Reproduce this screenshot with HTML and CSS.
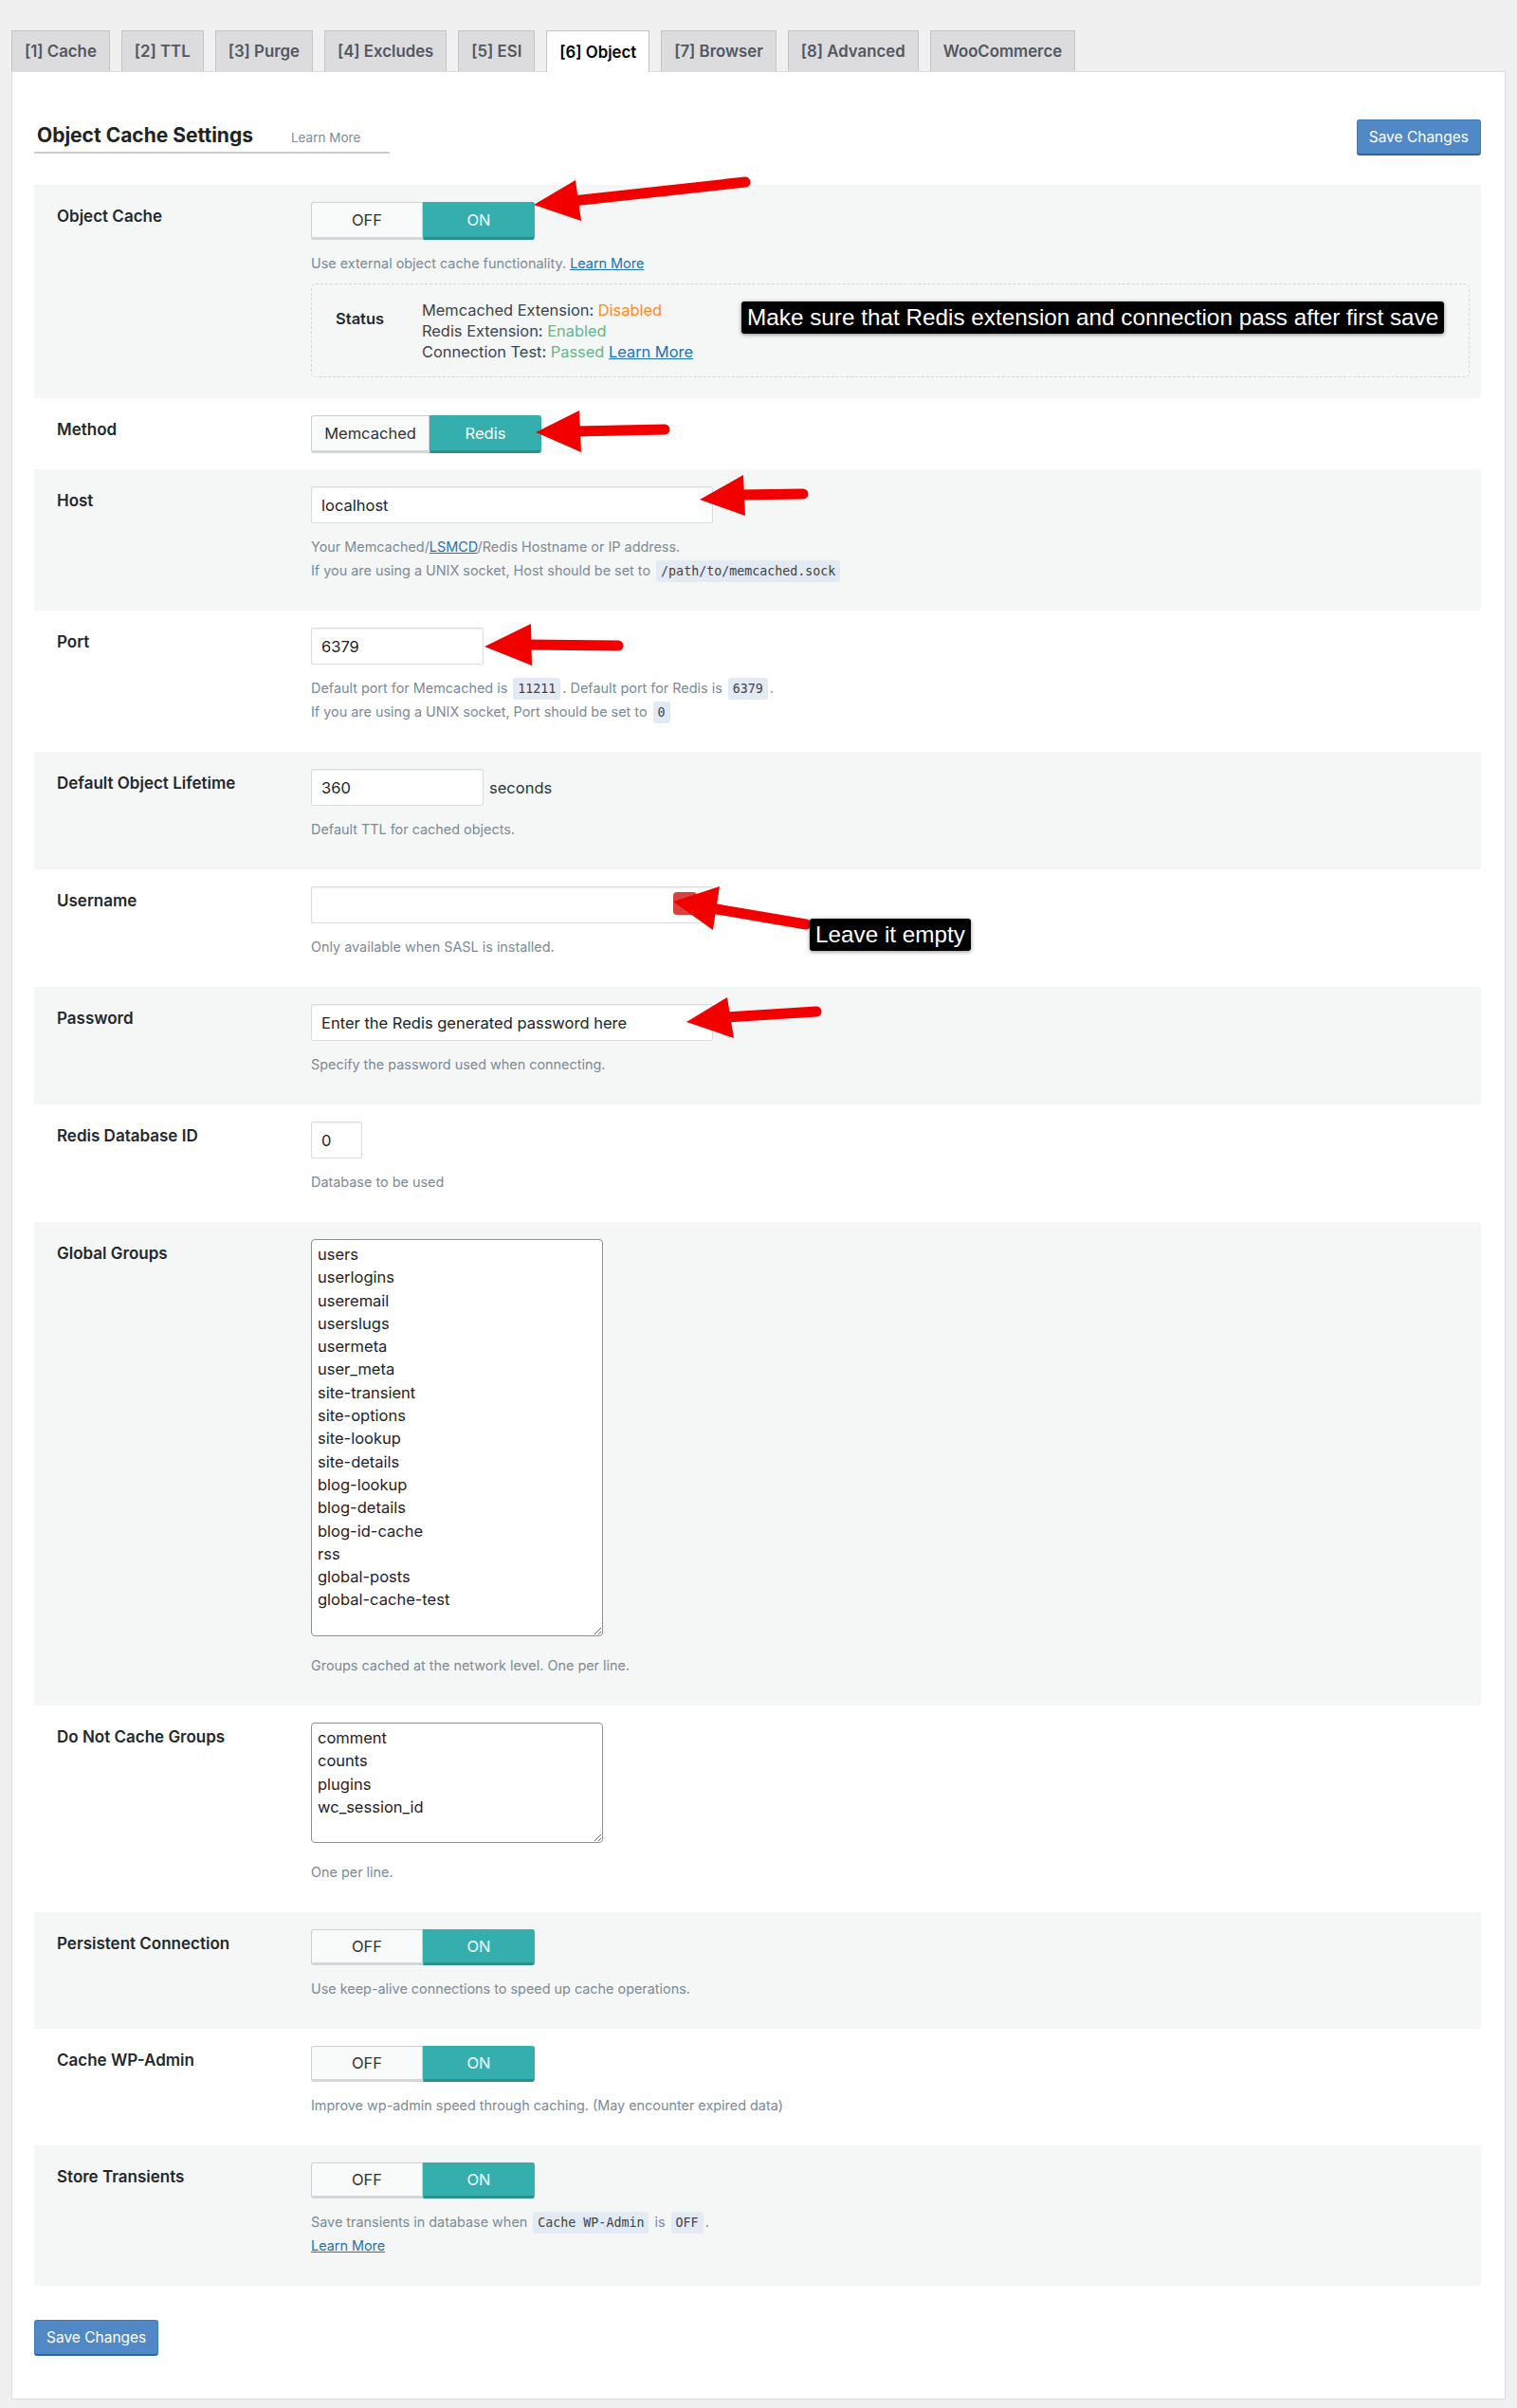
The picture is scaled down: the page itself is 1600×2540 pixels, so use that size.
FILE: index.html
```html
<!DOCTYPE html>
<html lang="en">
<head>
    <meta charset="UTF-8">
    <meta name="viewport" content="width=device-width, initial-scale=1.0">
    <title>Object Cache Settings</title>
    <link rel="stylesheet" href="styles.css">
</head>
<body>
<div class="page">
    <nav class="tabs">
        <a href="#" class="tab">[1] Cache</a>
        <a href="#" class="tab">[2] TTL</a>
        <a href="#" class="tab">[3] Purge</a>
        <a href="#" class="tab">[4] Excludes</a>
        <a href="#" class="tab">[5] ESI</a>
        <a href="#" class="tab active">[6] Object</a>
        <a href="#" class="tab">[7] Browser</a>
        <a href="#" class="tab">[8] Advanced</a>
        <a href="#" class="tab">WooCommerce</a>
    </nav>

    <form class="panel">
        <div class="panel-head">
            <h3 class="section-title">Object Cache Settings <a href="#" class="title-link">Learn More</a></h3>
            <button type="submit" class="btn-save">Save Changes</button>
        </div>

        <div class="settings">
            <div class="row">
                <div class="label">Object Cache</div>
                <div class="field">
                    <div class="switch switch-big"><span>OFF</span><span class="on">ON</span></div>
                    <p class="desc">Use external object cache functionality. <a href="#">Learn More</a></p>
                    <div class="status">
                        <div class="status-label">Status</div>
                        <div class="status-lines">
                            Memcached Extension: <span class="warn">Disabled</span><br>
                            Redis Extension: <span class="ok">Enabled</span><br>
                            Connection Test: <span class="ok">Passed</span> <a href="#">Learn More</a>
                        </div>
                    </div>
                </div>
            </div>

            <div class="row">
                <div class="label">Method</div>
                <div class="field">
                    <div class="switch switch-big method"><span class="wide">Memcached</span><span class="on">Redis</span></div>
                </div>
            </div>

            <div class="row">
                <div class="label">Host</div>
                <div class="field">
                    <input type="text" class="input input-long" value="localhost">
                    <p class="desc">
                        Your Memcached/<a href="#">LSMCD</a>/Redis Hostname or IP address.<br>
                        If you are using a UNIX socket, Host should be set to <code>/path/to/memcached.sock</code>
                    </p>
                </div>
            </div>

            <div class="row">
                <div class="label">Port</div>
                <div class="field">
                    <input type="text" class="input input-mid" value="6379">
                    <p class="desc">
                        Default port for Memcached is <code>11211</code>. Default port for Redis is <code>6379</code>.<br>
                        If you are using a UNIX socket, Port should be set to <code>0</code>
                    </p>
                </div>
            </div>

            <div class="row">
                <div class="label">Default Object Lifetime</div>
                <div class="field">
                    <div class="inline">
                        <input type="text" class="input input-mid" value="360">
                        <span>seconds</span>
                    </div>
                    <p class="desc">Default TTL for cached objects.</p>
                </div>
            </div>

            <div class="row">
                <div class="label">Username</div>
                <div class="field">
                    <input type="text" class="input input-long" value="">
                    <p class="desc">Only available when SASL is installed.</p>
                </div>
            </div>

            <div class="row">
                <div class="label">Password</div>
                <div class="field">
                    <input type="text" class="input input-long" value="Enter the Redis generated password here">
                    <p class="desc">Specify the password used when connecting.</p>
                </div>
            </div>

            <div class="row">
                <div class="label">Redis Database ID</div>
                <div class="field">
                    <input type="text" class="input input-short" value="0">
                    <p class="desc">Database to be used</p>
                </div>
            </div>

            <div class="row">
                <div class="label">Global Groups</div>
                <div class="field">
                    <textarea class="groups groups-tall">users
userlogins
useremail
userslugs
usermeta
user_meta
site-transient
site-options
site-lookup
site-details
blog-lookup
blog-details
blog-id-cache
rss
global-posts
global-cache-test</textarea>
                    <p class="desc">Groups cached at the network level. One per line.</p>
                </div>
            </div>

            <div class="row">
                <div class="label">Do Not Cache Groups</div>
                <div class="field">
                    <textarea class="groups">comment
counts
plugins
wc_session_id</textarea>
                    <p class="desc">One per line.</p>
                </div>
            </div>

            <div class="row">
                <div class="label">Persistent Connection</div>
                <div class="field">
                    <div class="switch"><span>OFF</span><span class="on">ON</span></div>
                    <p class="desc">Use keep-alive connections to speed up cache operations.</p>
                </div>
            </div>

            <div class="row">
                <div class="label">Cache WP-Admin</div>
                <div class="field">
                    <div class="switch"><span>OFF</span><span class="on">ON</span></div>
                    <p class="desc">Improve wp-admin speed through caching. (May encounter expired data)</p>
                </div>
            </div>

            <div class="row">
                <div class="label">Store Transients</div>
                <div class="field">
                    <div class="switch"><span>OFF</span><span class="on">ON</span></div>
                    <p class="desc">
                        Save transients in database when <code>Cache WP-Admin</code> is <code>OFF</code>.<br>
                        <a href="#">Learn More</a>
                    </p>
                </div>
            </div>
        </div>

        <button type="submit" class="btn-save btn-bottom">Save Changes</button>
    </form>

    <!-- red arrows and notes drawn over the form -->
    <svg class="marks" width="1600" height="2540" viewBox="0 0 1600 2540">
        <rect x="710" y="941" width="25" height="24" rx="4" fill="#d8413d"/>
        <g stroke="#f20000" stroke-width="11" stroke-linecap="round" fill="none">
            <line x1="604" y1="212" x2="786" y2="192"/>
            <line x1="606" y1="455" x2="701" y2="453"/>
            <line x1="780" y1="522" x2="847" y2="521"/>
            <line x1="555" y1="680" x2="652" y2="681"/>
            <line x1="750" y1="958" x2="850" y2="975"/>
            <line x1="766" y1="1073" x2="861" y2="1067"/>
        </g>
        <g fill="#f20000">
            <polygon points="563,216 607,190 613,233"/>
            <polygon points="565,456 611,433 613,477"/>
            <polygon points="738,527 784,501 786,544"/>
            <polygon points="511,682 560,658 561,702"/>
            <polygon points="710,951 759,935 752,981"/>
            <polygon points="724,1078 767,1052 774,1095"/>
        </g>
    </svg>
    <div class="callout callout-status">Make sure that Redis extension and connection pass after first save</div>
    <div class="callout callout-user">Leave it empty</div>
</div>
</body>
</html>
```

FILE: styles.css
```css
body {
    margin: 0;
    background: #f0f0f1;
    font-family: "Inter", "Noto Sans", sans-serif;
    color: #1d2327;
}
.page {
    position: relative;
    padding: 32px 12px 11px;
}

/* tabs */
.tabs {
    display: flex;
    align-items: flex-start;
    gap: 12px;
    height: 43px;
}
.tab {
    box-sizing: border-box;
    height: 43px;
    display: flex;
    align-items: center;
    padding: 0 13px;
    background: #dcdcde;
    border: 1px solid #c3c4c7;
    border-bottom: none;
    color: #50575e;
    font-size: 16.8px;
    font-weight: 600;
    text-decoration: none;
}
.tab.active {
    position: relative;
    z-index: 1;
    height: 44px;
    background: #fff;
    color: #000;
}

/* panel */
.panel {
    background: #fff;
    border: 1px solid #dcdcde;
    padding: 50px 25px 45px 23px;
}
.panel-head {
    display: flex;
    justify-content: space-between;
    align-items: center;
    margin-bottom: 31px;
}
.section-title {
    display: flex;
    align-items: baseline;
    width: 372px;
    margin: 0;
    padding: 0 0 1px 3px;
    border-bottom: 2px solid #ccc;
    font-size: 21px;
    font-weight: 700;
    line-height: 28px;
    color: #1d2327;
}
.title-link {
    margin-left: 40px;
    font-size: 13.5px;
    font-weight: 400;
    color: #7e8c98;
    text-decoration: none;
}
.btn-save {
    height: 38px;
    padding: 0 12px;
    background: #5089c6;
    border: 1px solid #3f79b8;
    border-bottom: 2px solid #2b64a6;
    border-radius: 3px;
    color: #fff;
    font-family: inherit;
    font-size: 15.5px;
    cursor: pointer;
}
.btn-bottom {
    margin-top: 36px;
}

/* setting rows */
.row {
    display: grid;
    grid-template-columns: 268px 1fr;
    padding: 18px 12px 16px 24px;
}
.row:nth-child(odd) {
    background: #f5f7f7;
}
.label {
    padding-top: 5px;
    font-size: 17px;
    font-weight: 600;
    line-height: 20px;
    color: #23282d;
}
.desc {
    margin: 12px 0 14px;
    font-size: 14.4px;
    line-height: 25px;
    color: #7b8a96;
}
a {
    color: #2271b1;
}
code {
    margin: 0 2px;
    padding: 4px 5px;
    background: #e2eaf3;
    border-radius: 3px;
    font-family: "DejaVu Sans Mono", monospace;
    font-size: 13.3px;
    line-height: 1;
    color: #3c434a;
}

/* on/off switch */
.switch {
    display: flex;
    width: max-content;
    height: 38px;
}
.switch-big {
    height: 40px;
}
.switch.method {
    margin-bottom: 1px;
}
.switch span {
    box-sizing: border-box;
    width: 118px;
    display: flex;
    align-items: center;
    justify-content: center;
    background: #f9fafa;
    border: 1px solid #ccd0d4;
    border-bottom: 3px solid #d4d7da;
    border-radius: 3px 0 0 3px;
    font-size: 16.5px;
    color: #2c3338;
}
.switch .wide {
    width: 125px;
}
.switch .on {
    background: #35afad;
    border-color: #35afad;
    border-bottom-color: #2a908e;
    border-radius: 0 3px 3px 0;
    color: #fff;
}

/* text inputs */
.input {
    display: block;
    box-sizing: border-box;
    height: 39px;
    padding: 0 10px;
    background: #fff;
    border: 1px solid #dcdcde;
    border-radius: 2px;
    box-shadow: inset 0 1px 2px rgba(0, 0, 0, .07);
    font-family: inherit;
    font-size: 16.5px;
    color: #1d2327;
}
.input-long {
    width: 424px;
}
.input-mid {
    width: 182px;
}
.input-short {
    width: 54px;
}
.inline {
    display: flex;
    align-items: center;
    gap: 6px;
    font-size: 16.5px;
    color: #2c3338;
}
.groups {
    display: block;
    box-sizing: border-box;
    width: 308px;
    height: 127px;
    padding: 3px 6px;
    border: 1px solid #8c8f94;
    border-radius: 4px;
    font-family: inherit;
    font-size: 16.5px;
    line-height: 24.3px;
    color: #1d2327;
}
.groups-tall {
    height: 419px;
}
.groups + .desc {
    margin-top: 18px;
}

/* status box */
.status {
    display: flex;
    margin: -5px 0 6px;
    padding: 16px 20px 15px 25px;
    border: 1px dashed #d3d7db;
    border-radius: 5px;
}
.status-label {
    width: 91px;
    margin-top: 9px;
    font-size: 16.5px;
    font-weight: 600;
    line-height: 22px;
    color: #23282d;
}
.status-lines {
    font-size: 16.4px;
    line-height: 22px;
    color: #3c434a;
}
.warn {
    color: #ff8a22;
}
.ok {
    color: #66b48a;
}

/* overlay notes */
.marks {
    position: absolute;
    left: 0;
    top: 0;
    pointer-events: none;
}
.callout {
    position: absolute;
    padding: 0 6px;
    background: #000;
    border-radius: 3px;
    box-shadow: 0 1px 4px rgba(0, 0, 0, .45);
    color: #fff;
    font-family: "Liberation Sans", Arial, sans-serif;
    font-size: 24.3px;
    line-height: 34px;
    white-space: nowrap;
}
.callout-status {
    left: 782px;
    top: 318px;
}
.callout-user {
    left: 854px;
    top: 969px;
}
```
